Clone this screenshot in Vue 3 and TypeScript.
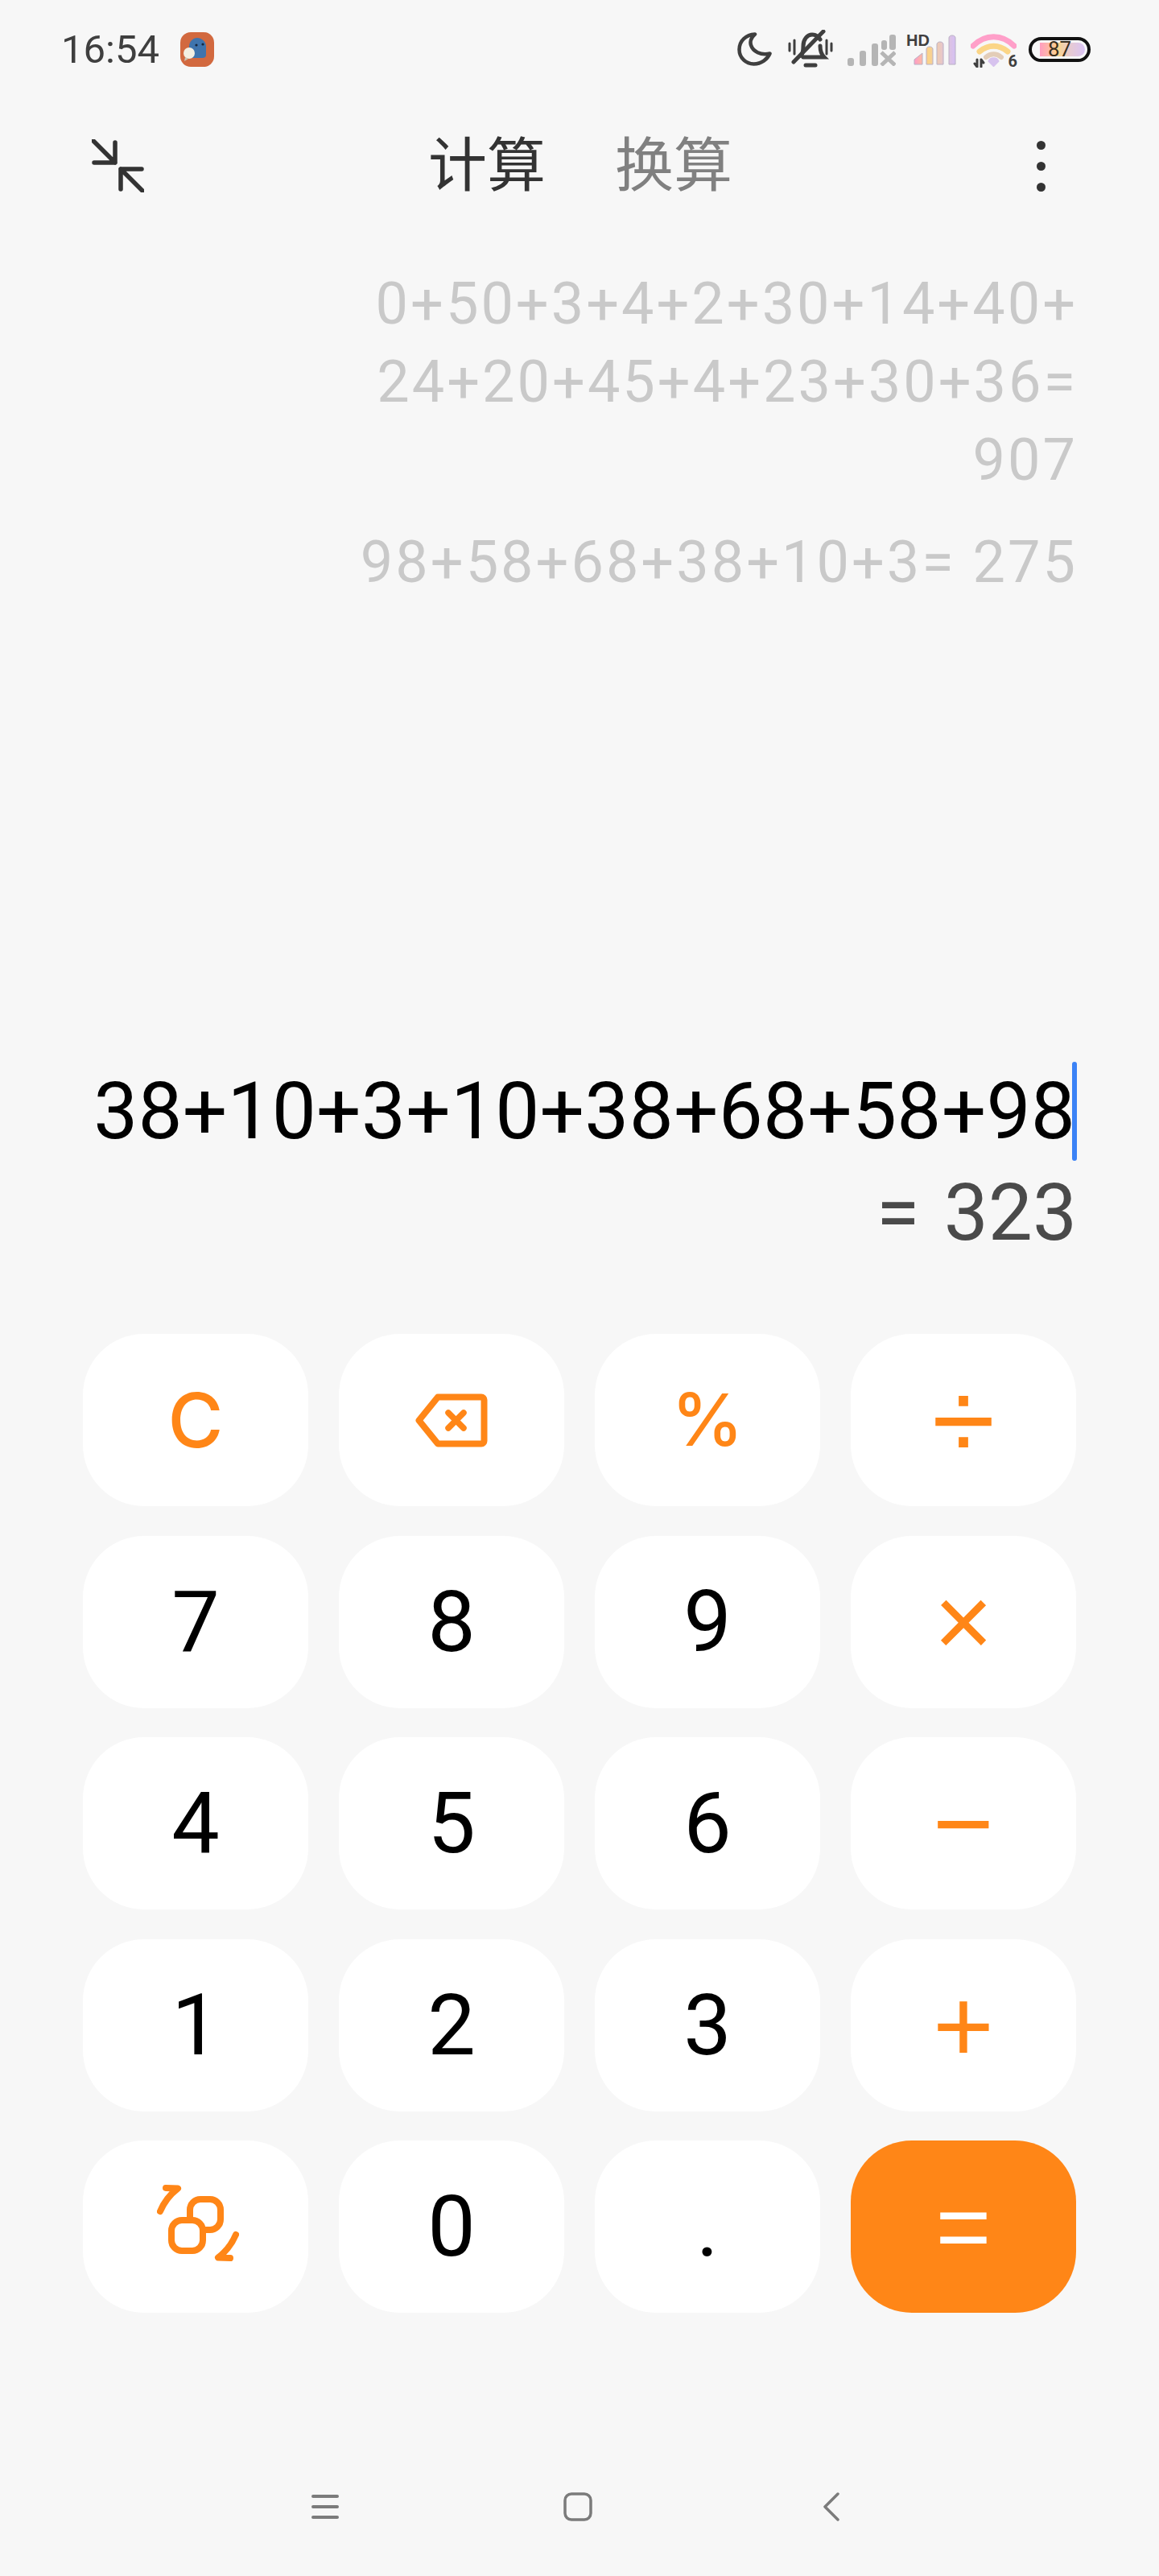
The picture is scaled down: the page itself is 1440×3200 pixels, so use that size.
<script setup lang="ts">
type KeyKind = 'digit' | 'op' | 'equals'

interface CalcKey {
  label: string
  kind: KeyKind
  icon?: 'backspace' | 'convert'
  cls?: string
}

const historyLines = ['0+50+3+4+2+30+14+40+', '24+20+45+4+23+30+36=', '907']

const keys: CalcKey[] = [
  { label: 'C', kind: 'op', cls: 'key--clear' },
  { label: '', kind: 'op', icon: 'backspace' },
  { label: '%', kind: 'op', cls: 'key--percent' },
  { label: '÷', kind: 'op', cls: 'key--sign key--div' },
  { label: '7', kind: 'digit' },
  { label: '8', kind: 'digit' },
  { label: '9', kind: 'digit' },
  { label: '×', kind: 'op', cls: 'key--sign key--times' },
  { label: '4', kind: 'digit' },
  { label: '5', kind: 'digit' },
  { label: '6', kind: 'digit' },
  { label: '−', kind: 'op', cls: 'key--sign key--wide' },
  { label: '1', kind: 'digit' },
  { label: '2', kind: 'digit' },
  { label: '3', kind: 'digit' },
  { label: '+', kind: 'op', cls: 'key--sign key--wide' },
  { label: '', kind: 'op', icon: 'convert' },
  { label: '0', kind: 'digit' },
  { label: '.', kind: 'digit' },
  { label: '=', kind: 'equals', cls: 'key--sign' },
]
</script>

<template>
  <div class="page">
    <header class="status">
      <div class="status-left">
        <span class="clock">16:54</span>
        <svg class="app-badge" width="42" height="43" viewBox="0 0 42 43">
          <rect width="42" height="43" rx="13" fill="#d2693f" />
          <path d="M11 30V18c0-7 5-11 10-11s11 4 11 11v10c0 3-2 4-5 4H15z" fill="#3f74ad" />
          <circle cx="20" cy="16" r="1.6" fill="#16263d" />
          <circle cx="28" cy="15" r="1.6" fill="#16263d" />
          <circle cx="11" cy="26" r="7" fill="#f3efe2" />
          <path d="M6 31l-1 5 5-3z" fill="#c9c4b4" />
        </svg>
      </div>
      <div class="status-right">
        <svg width="43" height="42" viewBox="0 0 43 42" fill="none" stroke="#3f3f3f" stroke-width="4.500" stroke-linejoin="round">
          <path d="M22 2.500C11 3 2.500 10.500 2.500 21.500 2.500 32 11 39.500 20.500 39.500 30 39.500 37.500 33.500 40.500 26.500 29 29 19.500 24 17 16 15.500 11 18 6 22 2.500z" />
        </svg>
        <svg class="ic-bell" width="56" height="48" viewBox="0 0 56 48" fill="none" stroke="#3f3f3f" stroke-width="5" stroke-linecap="round">
          <path d="M16 32c3-3 3-7 3-12 0-8 5-14 11-14 4 0 8 3 10 6M40 20c0 6 1 10 5 14H19" />
          <path d="M44 2L7 40" />
          <path d="M22 44h12" stroke-width="5" />
          <path d="M2 17v9M8 13v17M48 13v17M54 17v9" stroke-width="3" />
        </svg>
        <svg class="ic-signal" width="60" height="39" viewBox="0 0 60 39" fill="#b5b5b5">
          <rect x="0" y="29" width="8" height="10" rx="3" />
          <rect x="15" y="20" width="8" height="19" rx="3" />
          <rect x="30" y="11" width="8" height="28" rx="3" />
          <rect x="42" y="7" width="7" height="12" rx="3" />
          <rect x="52" y="0" width="8" height="19" rx="3" />
          <path d="M42 22l17 16M59 22L42 38" stroke="#b5b5b5" stroke-width="5" />
        </svg>
        <div class="ic-hd">
          <span class="hd-label">HD</span>
          <svg width="53" height="38" viewBox="0 0 53 38">
            <defs>
              <linearGradient id="barFill" x1="0" x2="1" y1="0" y2="0">
                <stop offset="0" stop-color="#ff9cc8" />
                <stop offset="0.35" stop-color="#fbd386" />
                <stop offset="0.7" stop-color="#e6c6cf" />
                <stop offset="1" stop-color="#d5c0f4" />
              </linearGradient>
            </defs>
            <path d="M1 37v-6l10-8v14zM16 37V18c0-4 8-4 8 0v19zM29 37V12c0-4 8-4 8 0v25zM44 37V4c0-4 8-4 8 0v33z" fill="url(#barFill)" stroke="#b9b0c4" stroke-width="1" />
          </svg>
        </div>
        <div class="ic-wifi">
          <svg width="57" height="43" viewBox="0 0 57 43" fill="none" stroke-linecap="round">
            <path d="M3 16C18 1 39 1 54 16" stroke="#ff9fc9" stroke-width="7" />
            <path d="M11 23c11-9 24-9 35 0" stroke="#fbd586" stroke-width="7" />
            <path d="M19 30c6-5 13-5 19 0" stroke="#e3cdb8" stroke-width="6" />
            <path d="M28.500 41l-6-6c2-5 10-5 12 0z" fill="#d7c3ee" stroke="#d7c3ee" stroke-width="2" stroke-linejoin="round" />
            <path d="M8 33v9M5 38l3 4M13 33v9M16 37l-3-4" stroke="#3f3f3f" stroke-width="3" />
          </svg>
          <span class="wifi-six">6</span>
        </div>
        <div class="battery">
          <span class="battery-fill" />
          <span class="battery-num">87</span>
        </div>
      </div>
    </header>

    <nav class="toolbar">
      <svg width="65" height="66" viewBox="0 0 65 66" fill="none" stroke="#333" stroke-width="5.500" stroke-linecap="round" stroke-linejoin="round">
        <path d="M2 2l27 27M29 4v25H3" />
        <path d="M63 64L36 37M36 62V37h26" />
      </svg>
      <div class="tabs">
        <span class="tab tab--on">计算</span>
        <span class="tab">换算</span>
      </div>
      <div class="more">
        <i /><i /><i />
      </div>
    </nav>

    <main class="screen">
      <section class="history">
        <div v-for="line in historyLines" :key="line">{{ line }}</div>
        <div class="entry--gap">98+58+68+38+10+3= 275</div>
      </section>
      <section class="display">
        <div class="expr">38+10+3+10+38+68+58+98<span class="caret" /></div>
        <div class="result">= 323</div>
      </section>
    </main>

    <section class="keypad">
      <button
        v-for="(k, i) in keys"
        :key="i"
        :class="['key', `key--${k.kind}`, k.cls]"
        type="button"
      >
        <svg v-if="k.icon === 'backspace'" width="90" height="67" viewBox="0 0 90 67" fill="none" stroke="#ff8617" stroke-width="8" stroke-linejoin="round" stroke-linecap="round">
          <path d="M28 4.500h54a3.500 3.500 0 0 1 3.500 3.500v51a3.500 3.500 0 0 1-3.500 3.500H28L4.500 33.500z" />
          <path d="M41 24l19 19M60 24L41 43" stroke-width="7.500" />
        </svg>
        <svg v-else-if="k.icon === 'convert'" class="ic-convert" width="102" height="96" viewBox="0 0 102 96" fill="none" stroke="#ff8617" stroke-width="8" stroke-linecap="round" stroke-linejoin="round">
          <rect x="41" y="18" width="38" height="38" rx="13" />
          <rect x="18" y="44" width="39" height="38" rx="13" fill="#fff" />
          <path d="M4 33C9 21 15 13 26 4.500L11 4" />
          <path d="M98 62C93 74 87 82 76 90.500L91 91" />
        </svg>
        <template v-else>{{ k.label }}</template>
      </button>
    </section>

    <footer class="navbar">
      <svg width="34" height="32" viewBox="0 0 34 32" stroke="#7b7b7b" stroke-width="4" stroke-linecap="round">
        <path d="M2 3h30M2 16h30M2 29h30" />
      </svg>
      <svg width="36" height="36" viewBox="0 0 36 36" fill="none" stroke="#7b7b7b" stroke-width="3.500">
        <rect x="2" y="2" width="32" height="32" rx="8" />
      </svg>
      <svg class="nav-back" width="20" height="36" viewBox="0 0 20 36" fill="none" stroke="#7b7b7b" stroke-width="3.500" stroke-linecap="round" stroke-linejoin="round">
        <path d="M18 2L2 18l16 16" />
      </svg>
    </footer>
  </div>
</template>

<style>
html,
body {
  margin: 0;
  background: #f7f7f7;
}
</style>

<style scoped>
.page {
  display: flex;
  flex-direction: column;
  width: 1440px;
  height: 3200px;
  background: #f7f7f7;
  font-family: Roboto, 'Noto Sans CJK SC', sans-serif;
}

/* Status bar */
.status {
  display: flex;
  align-items: center;
  justify-content: space-between;
  height: 122px;
  padding: 0 85px 0 76px;
  flex-shrink: 0;
}

.status-left {
  display: flex;
  align-items: center;
  gap: 26px;
}

.clock {
  font-size: 49px;
  color: #3f3f3f;
  line-height: 1;
}

.status-right {
  display: flex;
  align-items: center;
}

.ic-bell {
  margin-left: 20px;
}

.ic-signal {
  margin: 2px 0 0 18px;
}

.ic-hd {
  position: relative;
  width: 62px;
  height: 40px;
  margin-left: 13px;
  display: flex;
  justify-content: flex-end;
  align-items: flex-end;
}

.hd-label {
  position: absolute;
  left: 0;
  top: -1px;
  font: 700 20px/1 'Liberation Sans', sans-serif;
  color: #3f3f3f;
}

.ic-wifi {
  position: relative;
  margin: 2px 0 0 18px;
  height: 43px;
}

.wifi-six {
  position: absolute;
  right: -1px;
  bottom: -2px;
  font: 700 20px/1 Roboto, sans-serif;
  color: #3f3f3f;
}

.battery {
  position: relative;
  width: 77px;
  height: 31px;
  margin-left: 15px;
  border: 4px solid #111;
  border-radius: 16px;
  box-sizing: border-box;
  overflow: hidden;
  text-align: center;
}

.battery-fill {
  position: absolute;
  left: 10px;
  top: 3px;
  bottom: 3px;
  right: 3px;
  border-radius: 0 9px 9px 0;
  background: linear-gradient(90deg, #ff9cc0, #fcd58b 40%, #e8cbd0 65%, #d9c3f5);
}

.battery-num {
  position: relative;
  display: block;
  font-size: 26px;
  line-height: 23px;
  color: #3a3020;
}

/* Toolbar */
.toolbar {
  display: flex;
  align-items: center;
  justify-content: space-between;
  height: 168px;
  padding: 0 141px 0 114px;
  flex-shrink: 0;
}

.tabs {
  display: flex;
  gap: 86px;
  margin-left: -25px;
}

.tab {
  font-size: 73px;
  line-height: 1;
  color: #808080;
}

.tab--on {
  color: #333;
}

.more {
  display: flex;
  flex-direction: column;
  gap: 15px;
}

.more i {
  display: block;
  width: 11px;
  height: 11px;
  border-radius: 50%;
  background: #333;
}

/* History and current input */
.screen {
  flex: 1;
  display: flex;
  flex-direction: column;
  justify-content: space-between;
  padding: 39px 104px 87px 0;
  text-align: right;
}

.history {
  margin-right: -3px;
  font-size: 72px;
  letter-spacing: 3px;
  line-height: 97px;
  color: #c9c9c9;
}

.entry--gap {
  margin-top: 30px;
}

.expr {
  position: relative;
  font-size: 98px;
  letter-spacing: 0.2px;
  line-height: 126px;
  color: #000;
  white-space: nowrap;
}

.caret {
  position: absolute;
  right: -2px;
  top: 1px;
  width: 6px;
  height: 123px;
  border-radius: 3px;
  background: #3b82f6;
}

.result {
  margin-right: -2px;
  font-size: 98px;
  word-spacing: 6px;
  line-height: 126px;
  color: #4a4a4a;
}

/* Keypad */
.keypad {
  display: grid;
  grid-template-columns: repeat(4, 280px);
  grid-auto-rows: 214px;
  column-gap: 38px;
  row-gap: 36.500px;
  padding: 0 103px 0 103px;
  flex-shrink: 0;
}

.key {
  display: flex;
  align-items: center;
  justify-content: center;
  padding: 0;
  border: none;
  border-radius: 76px;
  background: #fff;
  font-family: Roboto, sans-serif;
  font-size: 106px;
  line-height: 1;
  color: #000;
}

.key--op {
  color: #ff8617;
}

.key--equals {
  background: #ff8617;
  color: #fff;
}

.key--clear {
  font-family: Inter, sans-serif;
  font-size: 94px;
  font-weight: 500;
}

.key--percent {
  font-family: Inter, sans-serif;
  font-size: 90px;
  font-weight: 500;
}

.key--sign {
  font-family: 'Liberation Sans', sans-serif;
  font-size: 118px;
}

.key--div {
  font-size: 143px;
}

.key--times {
  font-size: 126px;
}

.key--wide {
  font-size: 130px;
}

.ic-convert {
  margin: 0 0 9px 6px;
}

/* Navigation bar */
.navbar {
  display: flex;
  align-items: center;
  gap: 279px;
  height: 172px;
  margin-top: 155px;
  padding-left: 387px;
  flex-shrink: 0;
}

.nav-back {
  margin-left: 8px;
}
</style>
